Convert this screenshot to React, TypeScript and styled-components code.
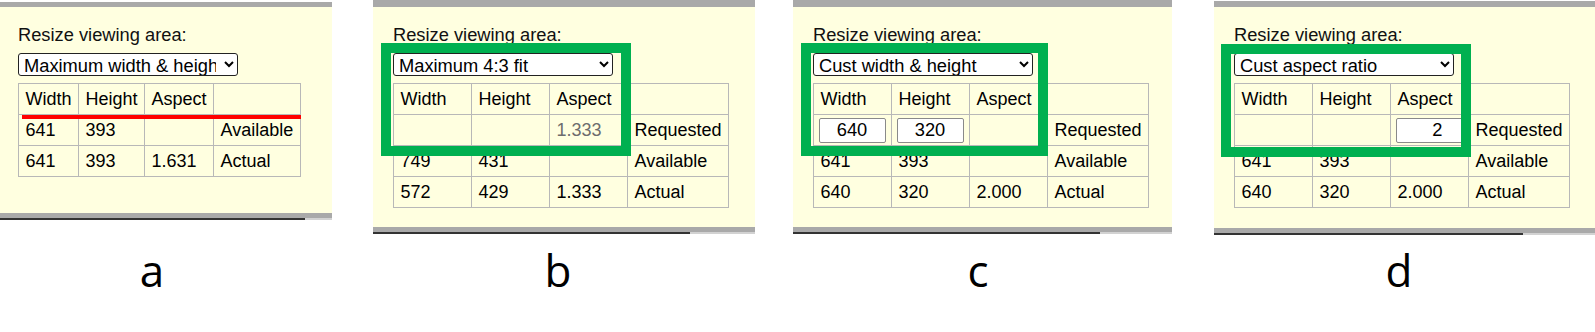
import { createGlobalStyle, styled } from "styled-components";

const GlobalStyle = createGlobalStyle`
  * {
    margin: 0;
    padding: 0;
    box-sizing: border-box;
  }
  body {
    background: #fff;
    font-family: "Liberation Sans", Arial, sans-serif;
  }
`;

const Page = styled.div`
  display: flex;
  width: 1595px;
  height: 332px;
  overflow: hidden;
`;

const Column = styled.div<{ $width: number; $left: number }>`
  display: flex;
  flex-direction: column;
  flex-shrink: 0;
  width: ${(p) => p.$width}px;
  margin-left: ${(p) => p.$left}px;
`;

const Slot = styled.div`
  height: 240px;
`;

const Panel = styled.div<{ $top: number; $height: number; $band: number; $pad: number }>`
  position: relative;
  margin-top: ${(p) => p.$top}px;
  height: ${(p) => p.$height}px;
  padding: 17px 0 0 ${(p) => p.$pad}px;
  background: #ffffe0;
  border-top: ${(p) => p.$band}px solid #a9a9a9;
  border-bottom: 5px solid #a9a9a9;
`;

const Edge = styled.div<{ $dark: number }>`
  height: 2px;
  background: linear-gradient(
    to right,
    #333 0 ${(p) => p.$dark}%,
    #d2d2d2 ${(p) => p.$dark}% 100%
  );
`;

const Title = styled.div`
  font-size: 18.3px;
  line-height: 21px;
  color: #111;
`;

const Picker = styled.select`
  display: block;
  margin-top: 8px;
  width: 220px;
  height: 23px;
  padding: 0 5px 0 1px;
  font: 18.3px "Liberation Sans", Arial, sans-serif;
  color: #000;
  background: #fff;
  border: 1px solid #222;
  border-radius: 3px;
`;

const Grid = styled.table`
  margin-top: 7px;
  border-collapse: collapse;
  font-size: 18px;
  color: #000;
`;

const Cell = styled.td<{ $w?: number; $muted?: boolean }>`
  border: 1px solid #b8b8b8;
  height: 31px;
  padding: 0 6.5px;
  line-height: 21px;
  white-space: nowrap;
  vertical-align: middle;
  width: ${(p) => (p.$w ? `${p.$w}px` : "auto")};
  color: ${(p) => (p.$muted ? "#6d6d6d" : "#000")};
`;

const Field = styled.input<{ $align: "center" | "right" }>`
  display: block;
  margin: 0 -2px;
  width: 67px;
  height: 25px;
  padding: 0 ${(p) => (p.$align === "right" ? "19px" : "4px")} 0 4px;
  font: 18.3px "Liberation Sans", Arial, sans-serif;
  text-align: ${(p) => p.$align};
  color: #000;
  background: #fff;
  border: 1px solid #8a8a8a;
  border-radius: 2px;
`;

const Highlight = styled.div<{ $left: number; $top: number; $w: number; $h: number }>`
  position: absolute;
  left: ${(p) => p.$left}px;
  top: ${(p) => p.$top}px;
  width: ${(p) => p.$w}px;
  height: ${(p) => p.$h}px;
  border: 10px solid #00b050;
  pointer-events: none;
`;

const Underline = styled.div`
  position: absolute;
  left: 22px;
  top: 108px;
  width: 279px;
  height: 4px;
  background: #ff0000;
`;

const Caption = styled.div<{ $shift: number }>`
  padding-right: ${(p) => p.$shift}px;
  font-family: "Open Sans", "Noto Sans", sans-serif;
  font-size: 44px;
  line-height: 60px;
  text-align: center;
  color: #000;
`;

type Value = string | { muted: string } | { input: string; align: "center" | "right" };

type Shot = {
  label: string;
  width: number;
  left: number;
  top: number;
  height: number;
  band: number;
  pad: number;
  dark: number;
  shift: number;
  choice: string;
  fixed: boolean;
  rows: Value[][];
  box?: { left: number; top: number; w: number; h: number };
  underline?: boolean;
};

const options = [
  "Maximum width & height",
  "Maximum 4:3 fit",
  "Cust width & height",
  "Cust aspect ratio",
];

const header: Value[] = ["Width", "Height", "Aspect", ""];

const shots: Shot[] = [
  {
    label: "a",
    width: 332,
    left: 0,
    top: 2,
    height: 216,
    band: 5,
    pad: 18,
    dark: 92,
    shift: 28,
    choice: options[0],
    fixed: false,
    underline: true,
    rows: [header, ["641", "393", "", "Available"], ["641", "393", "1.631", "Actual"]],
  },
  {
    label: "b",
    width: 382,
    left: 41,
    top: 0,
    height: 232,
    band: 7,
    pad: 20,
    dark: 83,
    shift: 12,
    choice: options[1],
    fixed: true,
    box: { left: 8, top: 36, w: 250, h: 113 },
    rows: [
      header,
      ["", "", { muted: "1.333" }, "Requested"],
      ["749", "431", "", "Available"],
      ["572", "429", "1.333", "Actual"],
    ],
  },
  {
    label: "c",
    width: 379,
    left: 38,
    top: 0,
    height: 232,
    band: 7,
    pad: 20,
    dark: 81,
    shift: 9,
    choice: options[2],
    fixed: true,
    box: { left: 8, top: 36, w: 247, h: 113 },
    rows: [
      header,
      [{ input: "640", align: "center" }, { input: "320", align: "center" }, "", "Requested"],
      ["641", "393", "", "Available"],
      ["640", "320", "2.000", "Actual"],
    ],
  },
  {
    label: "d",
    width: 381,
    left: 42,
    top: 1,
    height: 232,
    band: 6,
    pad: 20,
    dark: 81,
    shift: 11,
    choice: options[3],
    fixed: true,
    box: { left: 7, top: 37, w: 250, h: 113 },
    rows: [
      header,
      ["", "", { input: "2", align: "right" }, "Requested"],
      ["641", "393", "", "Available"],
      ["640", "320", "2.000", "Actual"],
    ],
  },
];

function renderValue(v: Value) {
  if (typeof v === "string") return v;
  if ("muted" in v) return v.muted;
  return <Field $align={v.align} defaultValue={v.input} />;
}

function App() {
  return (
    <>
      <GlobalStyle />
      <Page>
        {shots.map((s) => (
          <Column key={s.label} $width={s.width} $left={s.left}>
            <Slot>
              <Panel $top={s.top} $height={s.height} $band={s.band} $pad={s.pad}>
                <Title>Resize viewing area:</Title>
                <Picker defaultValue={s.choice}>
                  {options.map((o) => (
                    <option key={o}>{o}</option>
                  ))}
                </Picker>
                <Grid>
                  <tbody>
                    {s.rows.map((row, i) => (
                      <tr key={i}>
                        {row.map((v, j) => (
                          <Cell
                            key={j}
                            $w={s.fixed && j < 3 ? 78 : undefined}
                            $muted={typeof v === "object" && "muted" in v}
                          >
                            {renderValue(v)}
                          </Cell>
                        ))}
                      </tr>
                    ))}
                  </tbody>
                </Grid>
                {s.box && <Highlight $left={s.box.left} $top={s.box.top} $w={s.box.w} $h={s.box.h} />}
                {s.underline && <Underline />}
              </Panel>
              <Edge $dark={s.dark} />
            </Slot>
            <Caption $shift={s.shift}>{s.label}</Caption>
          </Column>
        ))}
      </Page>
    </>
  );
}

export default App;
